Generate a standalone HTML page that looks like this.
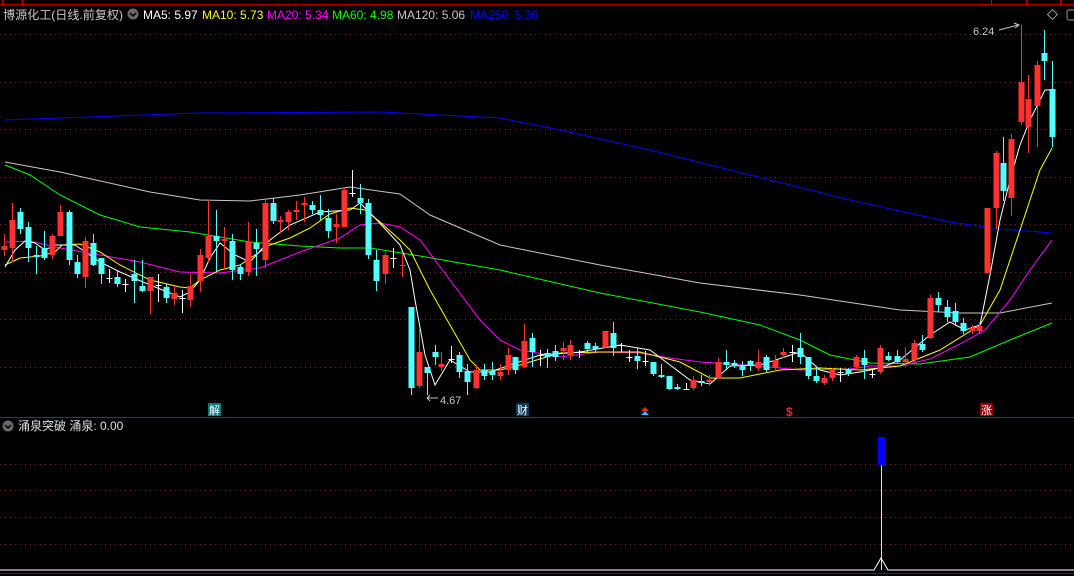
<!DOCTYPE html>
<html><head><meta charset="utf-8"><style>
html,body{margin:0;padding:0;background:#000;width:1074px;height:576px;overflow:hidden}
svg{display:block}
text{font-family:"Liberation Sans","Noto Sans CJK SC",sans-serif}
</style></head><body>
<svg id="s" width="1074" height="576" xmlns="http://www.w3.org/2000/svg">
<rect width="1074" height="576" fill="#000"/>
<g id="grid" stroke="#8a1a1a" stroke-width="1" stroke-dasharray="1,4"></g>
<line x1="0" y1="4.5" x2="1074" y2="4.5" stroke="#c00000"/>
<g stroke="#c00000"><line x1="2.5" y1="0" x2="2.5" y2="4"/><line x1="22.5" y1="0" x2="22.5" y2="4"/><line x1="991.5" y1="0" x2="991.5" y2="4"/><line x1="1026.5" y1="0" x2="1026.5" y2="4"/><line x1="1060.5" y1="0" x2="1060.5" y2="4"/></g>
<line x1="0" y1="417.5" x2="1074" y2="417.5" stroke="#c00000" stroke-width="1"/>
<text x="3" y="19" font-size="12" fill="#c8c8c8" textLength="120" lengthAdjust="spacingAndGlyphs">博源化工(日线.前复权)</text>
<circle cx="133" cy="14" r="5.5" fill="#6a6a6a"/><path d="M130 13 L133 16 L136 13" stroke="#000" fill="none" stroke-width="1.5"/>
<text x="143" y="19" font-size="12" fill="#fff">MA5: 5.97</text>
<text x="202" y="19" font-size="12" fill="#ffff00">MA10: 5.73</text>
<text x="267" y="19" font-size="12" fill="#ff00ff">MA20: 5.34</text>
<text x="332" y="19" font-size="12" fill="#00ff00">MA60: 4.98</text>
<text x="397" y="19" font-size="12" fill="#c8c8c8">MA120: 5.06</text>
<text x="470" y="19" font-size="12" fill="#0000ff">MA250: 5.36</text>
<rect x="1049" y="11" width="7" height="7" fill="none" stroke="#999" transform="rotate(45 1052.5 14.5)"/>
<rect x="1067" y="10" width="9" height="10" rx="2" fill="none" stroke="#999"/>
<g id="ma" fill="none" stroke-width="1"></g>
<g id="cd"></g>
<text x="973" y="35" font-size="11" fill="#c8c8c8">6.24</text>
<path d="M999 30 L1018 25 M1014 23 L1019 25 L1015 28" stroke="#c8c8c8" fill="none"/>
<text x="440" y="404" font-size="11" fill="#c8c8c8">4.67</text>
<path d="M427 398 L438 398 M430 395 L427 398 L430 401" stroke="#c8c8c8" fill="none"/>
<rect x="208" y="403" width="13" height="13" fill="#007a7a"/><text x="209" y="414" font-size="11" fill="#fff">解</text>
<rect x="516" y="403" width="13" height="13" fill="#0d3a5a"/><text x="517" y="414" font-size="11" fill="#fff">财</text>
<path d="M645 407 L649 411 L641 411Z" fill="#f22"/><path d="M645 411 L649 415 L641 415Z" fill="#3bf"/>
<text x="786" y="416" font-size="12" fill="#f22" font-weight="bold">$</text>
<rect x="980" y="403" width="13" height="13" fill="#8b0000"/><text x="981" y="414" font-size="11" fill="#fff">涨</text>
<circle cx="8" cy="426" r="5.5" fill="#6a6a6a"/><path d="M5 425 L8 428 L11 425" stroke="#000" fill="none" stroke-width="1.5"/>
<text x="18" y="430" font-size="12" fill="#e0e0e0">涌泉突破 涌泉: 0.00</text>
<rect x="878" y="437" width="7" height="28" fill="#0000ff"/>
<line x1="881.5" y1="465" x2="881.5" y2="570" stroke="#ffff00"/>
<path d="M0 570 L874 570 L881 558 L888 570 L1074 570" stroke="#fff" fill="none"/>
<line x1="0" y1="573.5" x2="1074" y2="573.5" stroke="#8b0000"/>
</svg>
<script>
var ns="http://www.w3.org/2000/svg";
function el(p,t,a){var e=document.createElementNS(ns,t);for(var k in a)e.setAttribute(k,a[k]);document.getElementById(p).appendChild(e);}
[34,82,129,177,224,272,319,367,464,490,517,544].forEach(function(y){el("grid","line",{x1:0,y1:y+.5,x2:1074,y2:y+.5});});
var ma={
"#0000ff":[[5,120],[200,113],[380,112],[500,118],[560,130],[650,150],[750,175],[850,200],[950,222],[1000,229],[1052,233]],
"#c8c8c8":[[5,162],[60,172],[150,192],[200,200],[250,201],[300,195],[350,187],[400,194],[430,215],[500,245],[600,265],[700,283],[800,295],[900,310],[960,313],[1000,313],[1052,303]],
"#00ff00":[[5,165],[30,175],[60,195],[100,215],[140,227],[190,232],[250,242],[300,246],[340,248],[370,248],[420,256],[500,270],[600,293],[700,312],[760,325],[800,340],[830,355],[870,363],[920,364],[970,357],[1010,340],[1052,323]],
"#ff00ff":[[5,242],[30,241],[60,248],[100,255],[140,262],[180,272],[220,273],[260,268],[300,252],[340,238],[360,225],[380,223],[400,227],[420,240],[450,280],[480,320],[500,340],[520,350],[560,357],[600,352],[640,353],[670,358],[700,362],[760,366],[800,370],[850,369],[870,366],[900,366],[930,359],[960,344],[985,330],[1010,300],[1030,270],[1052,240]],
"#ffff00":[[5,265],[20,258],[40,256],[55,252],[62,245],[80,244],[100,252],[120,265],[150,280],[180,287],[190,288],[200,280],[220,270],[240,265],[255,255],[270,245],[290,238],[310,228],[330,214],[350,208],[365,210],[380,222],[400,240],[410,250],[430,290],[450,325],[470,360],[480,370],[500,370],[520,365],[560,353],[600,352],[640,352],[680,362],[710,378],[740,378],[780,370],[820,368],[860,370],[900,366],[940,350],[980,325],[1000,290],[1020,230],[1040,170],[1052,148]],
"#ffffff":[[5,267],[15,250],[25,241],[35,243],[45,250],[55,245],[75,245],[100,262],[120,272],[150,285],[180,297],[190,292],[200,280],[210,258],[220,243],[235,255],[250,262],[270,240],[290,225],[320,212],[350,210],[360,203],[375,218],[400,245],[410,270],[415,300],[425,355],[435,385],[450,360],[470,372],[490,372],[510,365],[540,355],[580,352],[620,345],[650,350],[670,365],[690,380],[710,384],[730,366],[760,365],[800,352],[820,370],[840,375],[860,372],[880,368],[900,360],[930,335],[950,322],[965,330],[980,325],[990,275],[1000,220],[1010,180],[1020,145],[1030,120],[1045,90],[1052,90]]};
for(var c in ma)el("ma","polyline",{points:ma[c].map(function(p){return p.join(",")}).join(" "),stroke:c});
var C=[[4,246,250,234,256,'r'],[12,220,248,203,262,'r'],[20,212,229,208,234,'c'],[28,227,248,222,262,'c'],[36,255,257,246,274,'c'],[44,248,258,231,260,'c'],[52,236,255,234,259,'r'],[60,212,236,205,236,'r'],[69,212,260,210,265,'c'],[77,262,274,255,278,'c'],[85,241,277,237,288,'r'],[93,243,265,234,266,'c'],[101,258,274,258,284,'c'],[109,278,278,269,283,'w'],[117,277,284,270,287,'c'],[125,284,284,279,292,'w'],[134,274,281,260,303,'c'],[142,286,291,260,292,'c'],[150,277,291,277,314,'r'],[158,285,285,274,302,'w'],[166,287,298,284,303,'c'],[174,293,299,286,305,'r'],[182,298,298,290,313,'w'],[190,286,300,274,307,'r'],[200,255,281,249,292,'r'],[208,236,258,200,262,'r'],[216,236,241,210,272,'c'],[224,239,241,227,270,'r'],[232,241,270,234,280,'c'],[240,267,274,264,280,'c'],[248,242,272,222,276,'r'],[256,243,249,229,276,'c'],[265,203,260,200,268,'r'],[273,203,221,198,224,'c'],[280,220,222,216,233,'r'],[288,212,222,210,230,'r'],[296,210,212,201,220,'r'],[304,203,205,197,222,'r'],[312,205,210,201,214,'c'],[320,210,215,195,220,'c'],[328,218,231,209,238,'c'],[336,224,227,214,243,'r'],[344,190,227,187,227,'r'],[352,193,193,170,197,'w'],[360,198,203,184,214,'c'],[368,203,255,199,259,'c'],[376,260,281,250,291,'c'],[385,255,274,253,284,'r'],[393,258,259,248,268,'w'],[402,265,266,253,277,'r'],[411,307,388,307,395,'c'],[419,352,386,329,388,'r'],[427,367,373,367,395,'c'],[435,352,357,345,365,'c'],[441,364,367,352,371,'r'],[451,359,359,346,363,'w'],[459,355,372,352,378,'c'],[467,371,382,364,395,'c'],[476,370,388,365,389,'r'],[484,370,376,364,380,'c'],[492,371,375,362,380,'c'],[500,372,376,364,380,'r'],[508,355,370,348,375,'r'],[515,357,370,357,374,'c'],[524,341,367,324,368,'r'],[532,338,352,333,367,'c'],[540,355,355,350,366,'w'],[547,353,357,349,368,'c'],[555,351,357,345,361,'c'],[563,348,351,342,360,'r'],[570,345,355,340,360,'r'],[579,352,352,350,358,'w'],[587,343,349,341,353,'c'],[595,346,349,343,352,'c'],[605,331,347,331,348,'r'],[613,333,348,322,356,'c'],[621,345,345,343,352,'w'],[629,357,357,350,362,'w'],[637,356,361,348,369,'c'],[645,361,361,351,366,'w'],[653,362,374,362,376,'c'],[661,375,377,364,378,'c'],[669,376,389,376,390,'c'],[677,387,389,384,390,'c'],[686,389,389,383,390,'w'],[693,380,388,376,390,'r'],[701,381,383,375,386,'c'],[709,380,382,375,386,'r'],[718,362,378,358,379,'r'],[726,362,365,350,370,'c'],[734,363,366,360,368,'c'],[742,365,370,361,376,'c'],[750,361,366,360,371,'c'],[758,362,368,350,371,'r'],[766,357,370,355,372,'c'],[775,360,368,355,371,'r'],[783,352,355,348,358,'r'],[792,352,352,345,362,'w'],[800,348,357,333,364,'c'],[808,357,376,357,379,'c'],[816,376,381,368,383,'c'],[824,378,383,375,385,'r'],[832,370,378,368,381,'r'],[840,372,372,368,382,'w'],[848,369,374,368,376,'c'],[856,357,367,355,370,'r'],[864,358,365,350,379,'c'],[872,374,374,370,378,'w'],[880,348,372,345,374,'r'],[888,356,360,352,361,'c'],[897,356,362,350,363,'c'],[905,359,362,348,367,'r'],[914,343,360,340,362,'r'],[922,344,350,335,352,'c'],[930,298,338,295,339,'r'],[938,298,305,292,312,'c'],[947,307,317,300,322,'c'],[955,311,322,303,326,'c'],[963,323,331,318,334,'c'],[972,328,331,325,334,'r'],[979,326,331,322,334,'r'],[987,208,273,208,273,'r'],[996,153,208,151,229,'r'],[1003,163,191,137,201,'c'],[1011,139,198,134,216,'r'],[1021,82,122,25,125,'r'],[1028,99,127,75,153,'r'],[1037,65,106,61,147,'r'],[1044,53,61,30,80,'c'],[1052,89,137,61,147,'c']];
var col={r:"#ff3232",c:"#54ffff",w:"#ffffff"};
C.forEach(function(d){var x=d[0],f=col[d[5]];
el("cd","line",{x1:x+.5,y1:d[3],x2:x+.5,y2:d[4],stroke:f});
var h=Math.max(1,d[2]-d[1]);
el("cd","rect",{x:x-2.5,y:d[1],width:6,height:h,fill:f});});
</script>
</body></html>
